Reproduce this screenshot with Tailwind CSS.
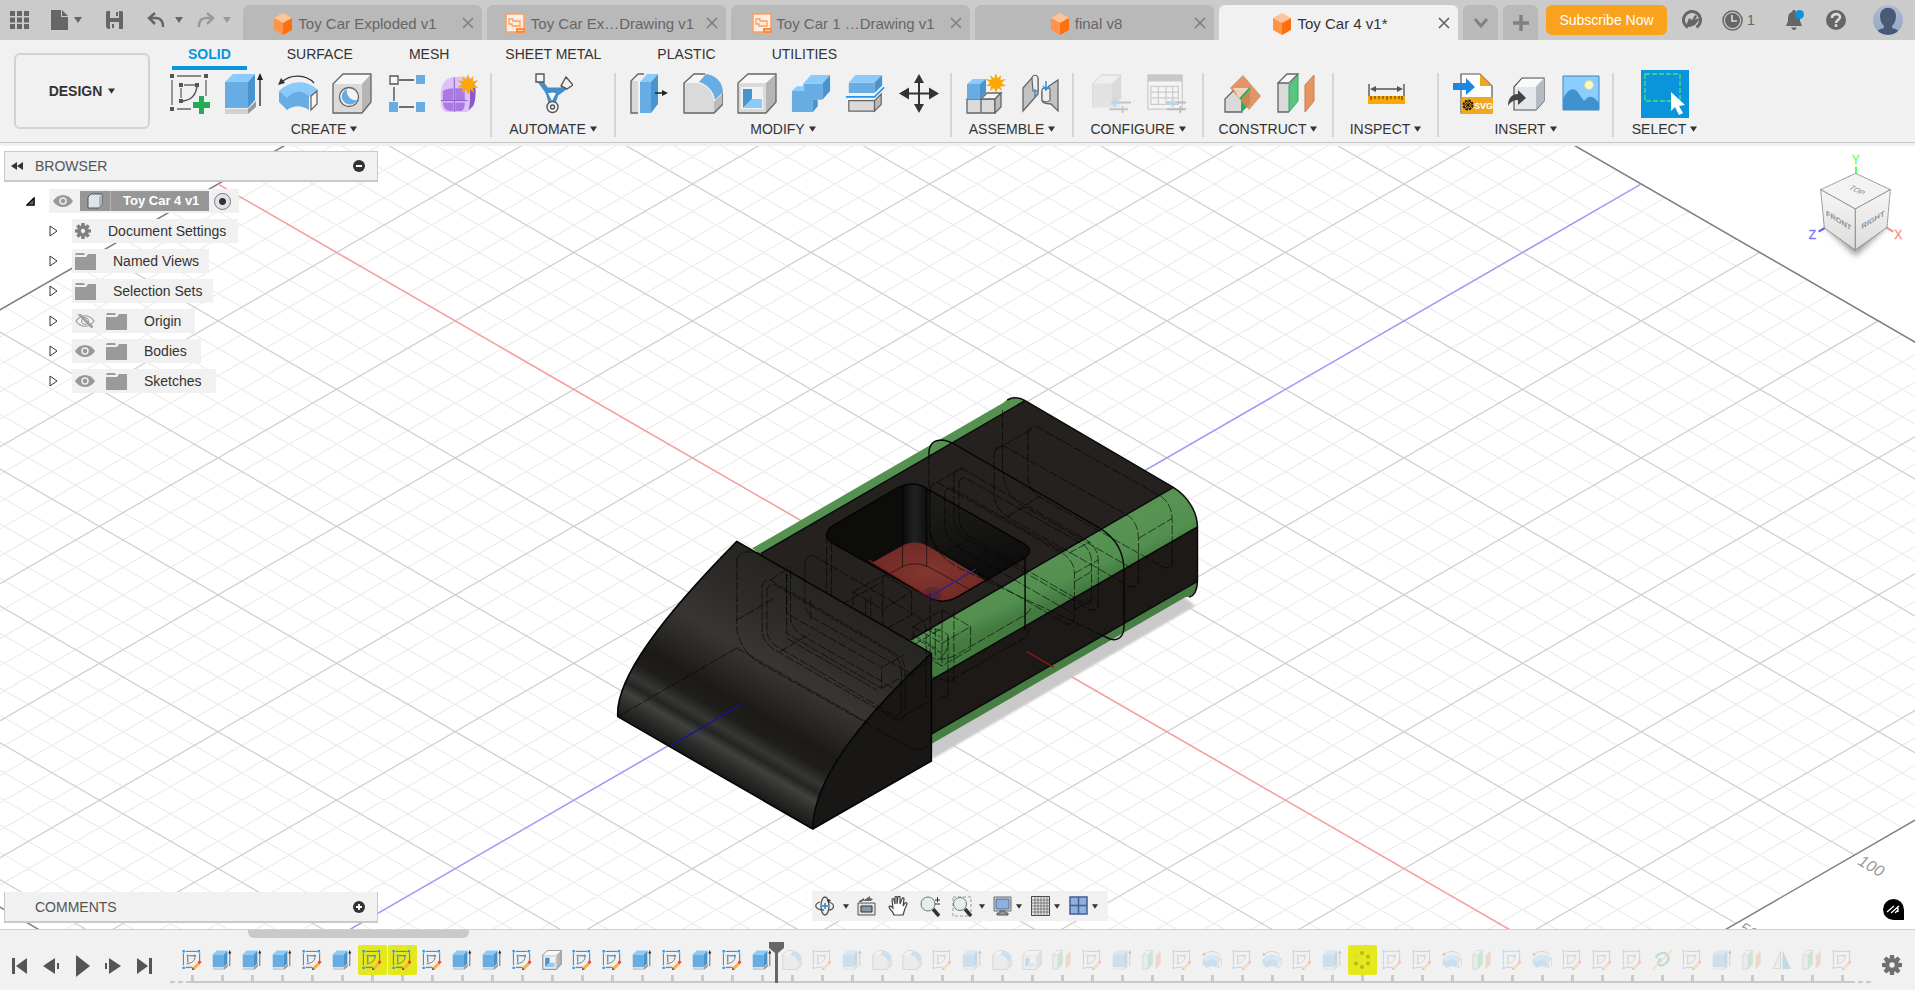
<!DOCTYPE html>
<html lang="en">
<head>
    <meta charset="UTF-8">
    <meta name="viewport" content="width=device-width, initial-scale=1.0">
    <title>Toy Car 4 v1*</title>
    <script src="https://cdn.jsdelivr.net/npm/@tailwindcss/browser@4"></script>
</head>
<body class="h-screen flex flex-col overflow-hidden bg-[#f1f1f1] font-['Liberation_Sans',Arial,sans-serif] text-sm text-[#333]">

<!-- Icon library -->
<svg class="hidden" aria-hidden="true">
    <symbol id="i-cube" viewBox="0 0 18 22">
        <path fill="#ffc39a" d="M9 0l9 5-9 5-9-5z"/><path fill="#ff9449" d="M0 5l9 5v12l-9-5z"/><path fill="#ff6f0f" d="M18 5l-9 5v12l9-5z"/>
    </symbol>
    <symbol id="i-drawing" viewBox="0 0 20 20">
        <path fill="#fbeee4" stroke="#ff9d5c" stroke-width="1.500" d="M1 1h18v18H1z"/>
        <path fill="none" stroke="#ff9d5c" stroke-width="1.300" d="M4 6h4v2h7v5H7v-2H4z"/><path fill="#ff8a3c" d="M11 15h9v5h-9z"/><path stroke="#ffd2b0" d="M13 17.500h5"/>
    </symbol>
    <symbol id="i-x" viewBox="0 0 12 12"><path stroke="currentColor" stroke-width="1.700" d="M1 1l10 10M11 1L1 11"/></symbol>
    <symbol id="i-down" viewBox="0 0 8 6"><path fill="currentColor" d="M0 0h8L4 6z"/></symbol>
    <symbol id="i-gear" viewBox="0 0 20 20">
        <g fill="currentColor"><path id="tooth" d="M8 0h4l.6 5H7.400zM8 20h4l.6-5H7.400z"/><use href="#tooth" transform="rotate(45 10 10)"/><use href="#tooth" transform="rotate(90 10 10)"/><use href="#tooth" transform="rotate(135 10 10)"/></g>
        <circle cx="10" cy="10" r="4.700" fill="none" stroke="currentColor" stroke-width="4"/>
    </symbol>
    <symbol id="i-folder" viewBox="0 0 21 17"><path fill="#9a9a9a" d="M0 4h11l2-3h8v16H0zM1 0h8l1 2H0z"/></symbol>
    <symbol id="i-eye" viewBox="0 0 20 12"><path fill="#999" d="M0 6c5-8 15-8 20 0-5 8-15 8-20 0z"/><circle cx="10" cy="6" r="3" fill="#999" stroke="#eee" stroke-width="1.500"/></symbol>
    <symbol id="i-eye-off" viewBox="0 0 20 14"><path fill="none" stroke="#999" stroke-width="1.200" d="M1 7c5-7 13-7 18 0-5 7-13 7-18 0zM3 0l14 14M5 0l13 13"/><circle cx="10" cy="7" r="3.500" fill="none" stroke="#999"/></symbol>

    <symbol id="i-sketch-base" viewBox="0 0 40 40">
        <path fill="none" stroke="#666" stroke-width="1.300" d="M7 3h24M2 7v25M36 7v16M7 36h14M14 12h11M11 15v10"/>
        <path fill="none" stroke="#555" stroke-width="1.500" d="M27 13c-1 9-6 14-14 15"/>
    </symbol>
    <symbol id="i-sketch" viewBox="0 0 40 41">
        <use href="#i-sketch-base" width="40" height="40"/>
        <path fill="#555" d="M0 1h4v4H0zM34 1h4v4h-4zM0 34h4v4H0zM9 10h4v4H9zM25 10h4v4h-4zM9 26h4v4H9z"/>
        <path fill="#26ab55" d="M29 23h5v6h6v6h-6v6h-5v-6h-6v-6h6z"/>
    </symbol>
    <symbol id="t-sketch" viewBox="0 0 40 42">
        <use href="#i-sketch-base" width="40" height="40"/>
        <path fill="none" stroke="#777" stroke-width="1.800" d="M7 3h24M2 7v25M36 7v16M7 37h14M14 12h11M11 15v10"/>
        <path fill="#3399e6" d="M0 0h5v5H0zM32 0h5v5h-5zM0 35h5v5H0zM9 10h4v4H9zM24 10h4v4h-4zM9 26h4v4H9z"/>
        <path fill="#fbb040" d="M32 26l5 4-11 11-5-4z"/><path fill="#ef3e36" d="M35 21l5 4-4 5-4-4z"/><path fill="#444" d="M21 37l5 4-6 1z"/>
    </symbol>
    <symbol id="i-extrude" viewBox="0 0 40 41">
        <path fill="#d0d0d0" d="M1 36h23v5H1z"/><path fill="#999" d="M24 36l8-8v6l-8 7z"/>
        <path fill="#67ade3" d="M1 9h23v26H1z"/><path fill="#8bcbfb" d="M1 9l8-8h22l-7 8z"/><path fill="#4994cd" d="M24 9l7-8v26l-7 8z"/>
        <path stroke="#222" stroke-width="1.300" d="M36 5v28"/><path fill="#222" d="M36 0l3 7h-6z"/>
    </symbol>
    <symbol id="i-revolve" viewBox="0 0 40 41">
        <path fill="none" stroke="#333" stroke-width="1.300" d="M4 9c8-8 24-8 32 1"/><path fill="#333" d="M0 12l3-7 4 5z"/>
        <path fill="#67ade3" d="M1 19c4-4 8-4 11-3 7-2 13 1 19 6v15c-8-5-15-5-22 0L1 29z"/>
        <path fill="#8bcbfb" d="M1 18c11-11 28-12 39-1l-8 7c-8-7-16-7-23 1z"/>
        <path fill="#f6f6f6" stroke="#666" stroke-width="1.300" d="M33 23l6-5v13l-6 6z"/>
    </symbol>
    <symbol id="i-hole" viewBox="0 0 40 41">
        <path fill="#f6f6f6" d="M1 11L11 1h28l-9 10z"/><path fill="#b5b5b5" d="M30 11l9-10v28l-9 11z"/><path fill="#dadada" d="M1 11h29v29H1z"/>
        <path fill="none" stroke="#666" stroke-width="1.300" d="M1 11L11 1h28v28l-9 11H1z"/>
        <circle cx="17" cy="24" r="9.500" fill="#f4f4f4" stroke="#666" stroke-width="1.300"/><path fill="#67ade3" d="M15 16a8 8 0 1 0 10 11c-6 1-11-4-10-11z"/>
    </symbol>
    <symbol id="i-pattern" viewBox="0 0 40 41">
        <path stroke="#444" stroke-width="1.300" d="M13 7h15M13 34h15M8 14v14"/><path fill="#f7f7f7" stroke="#555" stroke-width="1.300" d="M4 3h8v8H4z"/>
        <path fill="#67ade3" d="M30 2h9v9h-9zM3 29h9v10H3zM30 29h9v10h-9z"/>
    </symbol>
    <symbol id="i-star" viewBox="0 0 20 20"><path fill="#fba806" d="M10 0l1.500 5.500L15 2l-.5 5L20 6l-4.500 4 4.500 3-5.500.5L16 18l-4-3-2 5-2-5-4 3 1-5-5 0 4-3-4-4 5.500 1L4 2l4 3.500z"/></symbol>
    <symbol id="i-form" viewBox="0 0 42 41">
        <path fill="#dcc2f7" d="M1 17C3 6 10 2 19 3h10c7 2 9 9 8 20 0 10-4 17-12 17H10C2 40 0 36 1 17z"/>
        <path fill="#ab78e6" d="M3 18c3-2 8-3 11-3v13H3zM16 15h10v13H16zM3 30h11v9C6 39 4 36 3 30zM16 30h10c0 5-1 8-4 9h-6z"/>
        <path fill="#8b57cb" d="M31 15l5-5c2 5 2 16-1 23l-5 5c2-7 2-15 1-23z"/><path fill="none" stroke="#8b57cb" d="M1 28h28M15 4v36"/>
        <use href="#i-star" x="18" y="0" width="23" height="22"/>
    </symbol>
    <symbol id="i-automate" viewBox="0 0 40 41">
        <path fill="none" stroke="#438fca" stroke-width="5" stroke-linejoin="round" d="M7 8l8 11 4 14M34 13l-11 8-4 12M12 17h15"/><path fill="#fff" d="M15 20h8l-4 8z"/>
        <path fill="#f4f4f4" stroke="#555" stroke-width="1.400" d="M3 1h8v8H3zM33 4l7 8-6 4-6-3z"/><circle cx="19.500" cy="34" r="5.500" fill="#f4f4f4" stroke="#555" stroke-width="1.400"/><circle cx="19.500" cy="34" r="2" fill="none" stroke="#555" stroke-width="1.400"/>
    </symbol>
    <symbol id="i-press" viewBox="0 0 40 41">
        <path fill="#d8d8d8" d="M2 8h7v32H2z"/><path fill="none" stroke="#666" stroke-width="1.400" d="M9 40H2V8l7-7h6"/>
        <path fill="#67ade3" d="M11 9h11v31H11z"/><path fill="#8bcbfb" d="M11 9l7-8h11l-7 8z"/><path fill="#4994cd" d="M22 9l7-8v30l-7 9z"/>
        <path stroke="#222" stroke-width="1.500" d="M26 20h9"/><path fill="#222" d="M33 17l6 3-6 3z"/>
    </symbol>
    <symbol id="i-fillet" viewBox="0 0 40 41">
        <path fill="#f6f6f6" d="M1 10l10-9h10l-6 9z"/><path fill="#dadada" d="M1 10h14c9 2 15 9 16 19v11H1z"/><path fill="#bbb" d="M31 29l9-9v11l-9 9z"/>
        <path fill="none" stroke="#666" stroke-width="1.400" d="M22 1H11l-10 9v30h30l9-9V20"/><path fill="#67ade3" d="M16 9l7-8c10 1 17 9 17 18l-8 8c-1-9-8-16-16-18z"/>
    </symbol>
    <symbol id="i-shell" viewBox="0 0 40 41">
        <path fill="#f8f8f8" d="M1 10L11 1h28l-10 9z"/><path fill="#b5b5b5" d="M29 10l10-9v28L29 40z"/><path fill="#dadada" d="M1 10h28v30H1z"/><path fill="none" stroke="#666" stroke-width="1.300" d="M1 10L11 1h28v28L29 40H1z"/>
        <path fill="#f2f2f2" d="M4 14h22v22H4z"/><path fill="#4994cd" d="M6 16h9v10l-9 9z"/><path fill="#8bcbfb" d="M15 26h10v9H6z"/>
    </symbol>
    <symbol id="i-combine" viewBox="0 0 42 41">
        <path fill="#67ade3" d="M1 18h12V10h20v17H23v13H1z"/><path fill="#8bcbfb" d="M1 18l5-5h8v5zM13 10l8-9h20l-8 9z"/><path fill="#4994cd" d="M33 10l8-9v17l-8 9zM23 27h5v7l-5 6z"/>
    </symbol>
    <symbol id="i-split" viewBox="0 0 42 41">
        <path fill="#67ade3" d="M4 9h27v11H4z"/><path fill="#8bcbfb" d="M4 9l7-8h28l-8 8z"/><path fill="#4994cd" d="M31 9l8-8v11l-8 8z"/>
        <path fill="none" stroke="#2497ea" stroke-width="1.700" d="M1 24h30l10-10"/><path fill="#dadada" stroke="#666" stroke-width="1.300" d="M4 28h27v11H4z"/><path fill="#bbb" stroke="#666" stroke-width="1.300" d="M31 28l7-7v11l-7 7z"/>
    </symbol>
    <symbol id="i-move" viewBox="0 0 40 41">
        <path stroke="#333" stroke-width="2" d="M20 6v28M6 20.500h28"/><path fill="#333" d="M20 1l5 9H15zM20 40l5-9H15zM0 20.500l10-6v12zM40 20.500l-10-6v12z"/>
    </symbol>
    <symbol id="i-component" viewBox="0 0 40 41">
        <path fill="#dadada" stroke="#666" stroke-width="1.300" d="M1 26h14v14H1zM15 26h14v14H15z"/><path fill="#f4f4f4" stroke="#666" stroke-width="1.300" d="M15 26l6-6h14l-6 6z"/><path fill="#bbb" stroke="#666" stroke-width="1.300" d="M29 26l6-6v14l-6 6z"/>
        <path fill="#67ade3" d="M1 11h13v15H1z"/><path fill="#8bcbfb" d="M1 11l6-5h14l-7 5z"/><path fill="#4994cd" d="M14 11l6-5v14l-6 6z"/><use href="#i-star" x="20" y="0" width="20" height="20"/>
    </symbol>
    <symbol id="i-joint" viewBox="0 0 40 41">
        <path fill="#c2c2c2" stroke="#666" stroke-width="1.300" d="M3 14l8-9c2-4 7-3 7 1v14l-7 8-8 9zM38 6v31l-7-7c-5 0-9-1-9-4V18c2-3 5-3 7-2V12z" transform="matrix(1 0 0 1 0 1)"/><path fill="#eee" stroke="#666" stroke-width="1.200" d="M12 6c0-5 6-5 6 0v12h-5zM22 17c0-3 8-3 8 0v10c-2 3-7 2-8 0z"/>
        <path fill="none" stroke="#2b92e4" stroke-width="1.500" d="M15 16v9M26 8v8M23 13l3 4 3-4"/>
    </symbol>
    <symbol id="i-config" viewBox="0 0 42 41">
        <path fill="#e4e4e4" d="M1 10h28v25H1z"/><path fill="#efefef" stroke="#d0d0d0" d="M1 35V10l9-9h20v25"/><path fill="#e2e2e2" d="M1 10h20v25H1z"/><path fill="#dadada" d="M21 10l9-9v25l-9 8z"/><path stroke="#c4c4c4" stroke-width="2" d="M21 30h20M18 37h20M32 34v7"/><path stroke="#b4daf4" stroke-width="2" d="M24 25v10M20 30h8"/>
    </symbol>
    <symbol id="i-table" viewBox="0 0 42 41">
        <path fill="#f4f4f4" stroke="#ccc" stroke-width="1.300" d="M2 1h36v36H2z"/><path fill="#c8c8c8" d="M2 1h36v7H2z"/><path fill="none" stroke="#ccc" stroke-width="1.300" d="M5 13h29v19H5zM5 19h29M5 25h29M13 13v19M21 13v19M28 13v19"/><path stroke="#bbb" stroke-width="2" d="M22 30h20M22 37h20M36 34v7"/><path stroke="#b4daf4" stroke-width="2" d="M28 25v10M24 30h8"/>
    </symbol>
    <symbol id="i-plane" viewBox="0 0 40 41">
        <path fill="#dadada" stroke="#666" stroke-width="1.300" d="M2 26l9-9 8 4v18H2z"/><path fill="#2fae5c" d="M18 26l9-9v14l-9 9z"/><path fill="#dd8550" fill-opacity=".85" d="M20 2l18 21-12 14L7 15z"/><path fill="#fff" fill-opacity=".6" d="M10 15h17L17 27z"/><path stroke="#2fae5c" stroke-width="2" d="M27 15l-10 11"/>
    </symbol>
    <symbol id="i-offset" viewBox="0 0 40 41">
        <path fill="#dadada" d="M1 10h11v29H1z"/><path fill="#f7f7f7" stroke="#666" stroke-width="1.300" d="M1 10l9-9h11l-9 9z"/><path fill="none" stroke="#666" stroke-width="1.300" d="M12 39H1V10"/><path fill="#5ac481" stroke="#3ea466" d="M12 12l9-10v26l-9 11z"/><path fill="#e59560" stroke="#cd7d48" d="M28 12l9-10v26l-9 11z"/>
    </symbol>
    <symbol id="i-measure" viewBox="0 0 40 41">
        <path stroke="#555" stroke-width="1.400" d="M3 11v12M38 11v12M6 16h29"/><path fill="#555" d="M4 16l6-3v6zM37 16l-6-3v6z"/><path fill="#fba806" d="M2 23h37v8H2z"/><path stroke="#694500" stroke-width="1.200" d="M5 23v4M9 23v3M13 23v3M17 23v3M21 23v4M25 23v3M29 23v3M33 23v3M36 23v4"/>
    </symbol>
    <symbol id="i-svgfile" viewBox="0 0 40 41">
        <path fill="#fff" stroke="#555" stroke-width="1.200" d="M8 40V1h19l12 12v27z"/><path fill="#f0a823" d="M27 1l12 12H27zM8 24h32v17H8z"/><path fill="#1c86e3" d="M0 10h13V5l9 9-9 8v-5H0z"/>
        <circle cx="15" cy="32" r="4.500" fill="none" stroke="#201703" stroke-width="1.800" stroke-dasharray="2.500 1"/><path stroke="#201703" d="M11 32h8M15 28v8M12 29l6 6M18 29l-6 6"/>
        <text x="21" y="36" font-family="Liberation Sans, sans-serif" font-size="9" font-weight="bold" fill="#fff">SVG</text>
    </symbol>
    <symbol id="i-derive" viewBox="0 0 40 41">
        <path fill="#e4e7ec" stroke="#555" stroke-width="1.200" d="M7 14l8-9h22v23l-8 9H7z"/><path fill="#b5bbc6" d="M29 14l8-9v23l-8 9z"/><path fill="#fafafa" d="M8 14l7-8h21l-8 8z"/><path fill="#444" d="M1 33c0-8 4-12 10-12v-4l8 8-8 7v-5c-4 0-7 1-10 6z"/>
    </symbol>
    <symbol id="i-image" viewBox="0 0 40 41"><path fill="#8bcdff" stroke="#3d86bd" d="M2 3h36v34H2z"/><circle cx="28" cy="12" r="4.500" fill="#fff7c4" stroke="#d9d98e"/><path fill="#3e92cf" d="M2 26c6-12 12-12 16-5l5 7c5-6 9-6 15 2v7H2z"/></symbol>
    <symbol id="i-select" viewBox="0 0 48 48"><path fill="#0a94dc" d="M0 0h48v48H0z"/><path fill="none" stroke="#4fe07a" stroke-width="1.300" stroke-dasharray="5 2" d="M4 4h35v27H4z"/><path fill="#fff" d="M30 22l14 13-6 1 4 7-4 2-4-8-4 4z"/></symbol>
    <symbol id="i-circ" viewBox="0 0 40 40"><g fill="#b4bb14"><circle cx="20" cy="6" r="4"/><circle cx="20" cy="34" r="4"/><circle cx="32" cy="13" r="4"/><circle cx="32" cy="27" r="4"/><circle cx="8" cy="27" r="4"/></g><circle cx="8" cy="13" r="3" fill="#eff07a" stroke="#b4bb14"/></symbol>
    <symbol id="i-thread" viewBox="0 0 40 40"><path fill="none" stroke="#2fae5c" stroke-width="5" d="M8 16c4-12 24-14 25-1 0 11-11 18-18 15-4-2-3-9 3-13"/><path stroke="#e59560" stroke-width="2.500" d="M1 39L39 1"/></symbol>
    <symbol id="i-mirror" viewBox="0 0 40 40"><path fill="#e4e4e4" stroke="#777" stroke-width="1.500" d="M17 3v34H3z"/><path fill="#438fca" d="M21 1v37h17z"/></symbol>
</svg>

<!-- Application bar -->
<header class="flex h-10 shrink-0 items-end bg-[#cbcbcb] text-[#666]">
    <div class="flex h-full w-[243px] shrink-0 items-center">
        <button aria-label="Data panel" class="ml-2.5"><svg class="h-[18px] w-[19px]" viewBox="0 0 19 18"><path fill="#666" d="M0 0h5v5H0zM7 0h5v5H7zM14 0h5v5h-5zM0 6.500h5v5H0zM7 6.500h5v5H7zM14 6.500h5v5h-5zM0 13h5v5H0zM7 13h5v5H7zM14 13h5v5h-5z"/></svg></button>
        <button aria-label="File" class="ml-[22px] flex items-center gap-1.5"><svg class="h-5 w-[17px]" viewBox="0 0 17 20"><path fill="#666" d="M0 0h10v7h7v13H0zM11 0l6 6h-6z"/></svg><svg class="h-1.5 w-2"><use href="#i-down"/></svg></button>
        <button aria-label="Save" class="ml-6"><svg class="h-[18px] w-[17px]" viewBox="0 0 17 18"><path fill="#666" fill-rule="evenodd" d="M1 0h15l1 1v17H2l-2-2V1zM4 0v7h9V0zM4 11v7h9v-7z"/><path fill="#666" d="M10 1h2v4h-2zM6 13h2v4H6z"/></svg></button>
        <button aria-label="Undo" class="ml-6 flex items-center gap-2.5"><svg class="h-4 w-[18px]" viewBox="0 0 18 16"><path fill="none" stroke="#666" stroke-width="2.500" d="M8 1L2 6l6 6M2 6h7c5 0 7 4 7 9"/></svg><svg class="h-1.5 w-2"><use href="#i-down"/></svg></button>
        <button aria-label="Redo" class="ml-3.5 flex items-center gap-2 text-[#999]"><svg class="h-4 w-[18px]" viewBox="0 0 18 16"><path fill="none" stroke="#999" stroke-width="2.500" d="M10 1l6 5-6 6M16 6H9c-5 0-7 4-7 9"/></svg><svg class="h-1.5 w-2"><use href="#i-down"/></svg></button>
    </div>
    <nav class="flex min-w-0 gap-[5px] text-[15px]" aria-label="Documents">
        <div class="flex h-[35px] w-[239px] items-center rounded-t-md bg-[#b9b9b9] pl-1.5 pr-2">
            <button class="flex flex-1 items-center justify-center gap-1.5 whitespace-nowrap pt-0.5"><svg class="h-[22px] w-[18px]"><use href="#i-cube"/></svg>Toy Car Exploded v1</button>
            <button aria-label="Close"><svg class="size-3 text-[#808080]"><use href="#i-x"/></svg></button>
        </div>
        <div class="flex h-[35px] w-[239px] items-center rounded-t-md bg-[#b9b9b9] pl-1.5 pr-2">
            <button class="flex flex-1 items-center justify-center gap-1.5 whitespace-nowrap pt-0.5"><svg class="size-5"><use href="#i-drawing"/></svg>Toy Car Ex…Drawing v1</button>
            <button aria-label="Close"><svg class="size-3 text-[#808080]"><use href="#i-x"/></svg></button>
        </div>
        <div class="flex h-[35px] w-[239px] items-center rounded-t-md bg-[#b9b9b9] pl-1.5 pr-2">
            <button class="flex flex-1 items-center justify-center gap-1 whitespace-nowrap pt-0.5"><svg class="size-5"><use href="#i-drawing"/></svg>Toy Car 1 …Drawing v1</button>
            <button aria-label="Close"><svg class="size-3 text-[#808080]"><use href="#i-x"/></svg></button>
        </div>
        <div class="flex h-[35px] w-[239px] items-center rounded-t-md bg-[#b9b9b9] pl-1 pr-2">
            <button class="flex flex-1 items-center justify-center gap-1.5 whitespace-nowrap pt-0.5"><svg class="h-[22px] w-[18px]"><use href="#i-cube"/></svg>final v8</button>
            <button aria-label="Close"><svg class="size-3 text-[#808080]"><use href="#i-x"/></svg></button>
        </div>
        <div class="flex h-[35px] w-[239px] items-center rounded-t-md bg-[#f1f1f1] pl-1 pr-2 text-[#333]">
            <button class="flex flex-1 items-center justify-center gap-1.5 whitespace-nowrap pt-0.5"><svg class="h-[22px] w-[18px]"><use href="#i-cube"/></svg>Toy Car 4 v1*</button>
            <button aria-label="Close"><svg class="size-3 text-[#666]"><use href="#i-x"/></svg></button>
        </div>
        <button aria-label="All tabs" class="flex h-[35px] w-[35px] items-center justify-center rounded-t-md bg-[#b9b9b9]"><svg class="h-3 w-4" viewBox="0 0 16 12"><path fill="none" stroke="#808080" stroke-width="3" d="M2 2l6 7 6-7"/></svg></button>
        <button aria-label="New tab" class="flex h-[35px] w-[35px] items-center justify-center rounded-t-md bg-[#b9b9b9]"><svg class="size-4" viewBox="0 0 16 16"><path stroke="#808080" stroke-width="3.500" d="M8 0v16M0 8h16"/></svg></button>
    </nav>
    <div class="ml-2 flex h-full flex-1 items-center">
        <button class="h-[30px] w-[121px] rounded-md bg-[#faa21b] text-sm text-white">Subscribe Now</button>
        <button aria-label="Extensions" class="ml-[15px]"><svg class="size-5" viewBox="0 0 20 20"><circle cx="10" cy="10" r="8.500" fill="none" stroke="#666" stroke-width="3" stroke-dasharray="44 9" transform="rotate(120 10 10)"/><path fill="#666" d="M4 16l3-8 3 2 3-5 2 1-2 4 3-2 1 2-4 5-5 2z"/></svg></button>
        <button aria-label="Job status" class="ml-5 flex items-center gap-1"><svg class="size-[21px]" viewBox="0 0 21 21"><circle cx="10.500" cy="10.500" r="9.500" fill="none" stroke="#666" stroke-width="1.500"/><circle cx="10.500" cy="10.500" r="7.500" fill="#666"/><path fill="none" stroke="#ddd" stroke-width="1.600" d="M10 5v6h5"/></svg>1</button>
        <button aria-label="Notifications" class="ml-[30px]"><svg class="h-5 w-[19px]" viewBox="0 0 19 20"><path fill="#666" d="M8 0h2l1 2c4 1 4 5 4 9l2 5H1l2-5c0-4 0-8 4-9zM6 17.500h6l-2 2.500H8z"/><circle cx="14.500" cy="4.500" r="4.500" fill="#0a94dc"/></svg></button>
        <button aria-label="Help" class="ml-[22px]"><svg class="size-5" viewBox="0 0 20 20"><circle cx="10" cy="10" r="10" fill="#666"/><path fill="none" stroke="#ddd" stroke-width="2.600" d="M6 8c0-5 8-5 8-1 0 3-4 3-4 6"/><circle cx="10" cy="15.500" r="1.500" fill="#ddd"/></svg></button>
        <button aria-label="Account" class="ml-auto mr-3"><svg class="size-[30px]" viewBox="0 0 30 30"><defs><clipPath id="av"><circle cx="15" cy="15" r="15"/></clipPath><linearGradient id="avg" x2="0" y2="1"><stop stop-color="#aebbd4"/><stop offset="1" stop-color="#8fa5c6"/></linearGradient></defs><g clip-path="url(#av)"><path fill="url(#avg)" d="M0 0h30v30H0z"/><path fill="#4a5a74" d="M7 11c0-11 16-11 16 0 0 5-2 8-4 10v2c4 1 7 2 8 7H3c1-5 4-6 8-7v-2c-2-2-4-5-4-10z"/></g></svg></button>
    </div>
</header>

<!-- Ribbon -->
<section class="flex shrink-0 border-b border-[#c9c9c9] pb-[5px]" aria-label="Toolbar">
    <div class="w-[158px] shrink-0 pl-[14px] pt-[13px]">
        <button class="flex h-[76px] w-[136px] items-center justify-center gap-1.5 rounded-md border-2 border-[#d2d2d2] font-bold">DESIGN <svg class="h-1.5 w-[7px]"><use href="#i-down"/></svg></button>
    </div>
    <div>
        <div class="flex gap-6 pl-[14px]" role="tablist">
            <button role="tab" class="h-[30px] border-b-4 border-[#0a94dc] px-4 pt-0.5 font-bold text-[#0a94dc]">SOLID</button>
            <button role="tab" class="h-[30px] border-b-4 border-transparent px-4 pt-0.5">SURFACE</button>
            <button role="tab" class="h-[30px] border-b-4 border-transparent px-4 pt-0.5">MESH</button>
            <button role="tab" class="h-[30px] border-b-4 border-transparent px-4 pt-0.5">SHEET METAL</button>
            <button role="tab" class="h-[30px] border-b-4 border-transparent px-4 pt-0.5">PLASTIC</button>
            <button role="tab" class="h-[30px] border-b-4 border-transparent px-4 pt-0.5">UTILITIES</button>
        </div>
        <div class="mt-[3px] flex">
            <div class="flex h-16 w-[334px] flex-col items-center justify-between border-r-2 border-[#d6d6d6]">
                <div class="flex gap-3.5 pl-0.5">
                    <button aria-label="Create Sketch"><svg class="h-[41px] w-10"><use href="#i-sketch"/></svg></button>
                    <button aria-label="Extrude"><svg class="h-[41px] w-10"><use href="#i-extrude"/></svg></button>
                    <button aria-label="Revolve"><svg class="h-[41px] w-10"><use href="#i-revolve"/></svg></button>
                    <button aria-label="Hole"><svg class="h-[41px] w-10"><use href="#i-hole"/></svg></button>
                    <button aria-label="Rectangular Pattern"><svg class="h-[41px] w-10"><use href="#i-pattern"/></svg></button>
                    <button aria-label="Create Form"><svg class="h-[41px] w-10"><use href="#i-form"/></svg></button>
                </div>
                <button class="flex items-center gap-1 leading-4">CREATE <svg class="h-1.5 w-[7px]"><use href="#i-down"/></svg></button>
            </div>
            <div class="flex h-16 w-[124px] flex-col items-center justify-between border-r-2 border-[#d6d6d6]">
                <button aria-label="Automated Modeling"><svg class="h-[41px] w-10"><use href="#i-automate"/></svg></button>
                <button class="flex items-center gap-1 leading-4">AUTOMATE <svg class="h-1.5 w-[7px]"><use href="#i-down"/></svg></button>
            </div>
            <div class="flex h-16 w-[336px] flex-col items-center justify-between border-r-2 border-[#d6d6d6]">
                <div class="flex gap-3.5 pl-0.5">
                    <button aria-label="Press Pull"><svg class="h-[41px] w-10"><use href="#i-press"/></svg></button>
                    <button aria-label="Fillet"><svg class="h-[41px] w-10"><use href="#i-fillet"/></svg></button>
                    <button aria-label="Shell"><svg class="h-[41px] w-10"><use href="#i-shell"/></svg></button>
                    <button aria-label="Combine"><svg class="h-[41px] w-10"><use href="#i-combine"/></svg></button>
                    <button aria-label="Split Body"><svg class="h-[41px] w-10"><use href="#i-split"/></svg></button>
                    <button aria-label="Move"><svg class="h-[41px] w-10"><use href="#i-move"/></svg></button>
                </div>
                <button class="flex items-center gap-1 leading-4">MODIFY <svg class="h-1.5 w-[7px]"><use href="#i-down"/></svg></button>
            </div>
            <div class="flex h-16 w-[122px] flex-col items-center justify-between border-r-2 border-[#d6d6d6]">
                <div class="flex gap-3.5 pl-0.5">
                    <button aria-label="New Component"><svg class="h-[41px] w-10"><use href="#i-component"/></svg></button>
                    <button aria-label="Joint"><svg class="h-[41px] w-10"><use href="#i-joint"/></svg></button>
                </div>
                <button class="flex items-center gap-1 leading-4">ASSEMBLE <svg class="h-1.5 w-[7px]"><use href="#i-down"/></svg></button>
            </div>
            <div class="flex h-16 w-[130px] flex-col items-center justify-between border-r-2 border-[#d6d6d6]">
                <div class="flex gap-3.5 pl-0.5">
                    <button aria-label="Configure Design" disabled><svg class="h-[41px] w-10"><use href="#i-config"/></svg></button>
                    <button aria-label="Configuration Table" disabled><svg class="h-[41px] w-10"><use href="#i-table"/></svg></button>
                </div>
                <button class="flex items-center gap-1 leading-4">CONFIGURE <svg class="h-1.5 w-[7px]"><use href="#i-down"/></svg></button>
            </div>
            <div class="flex h-16 w-[130px] flex-col items-center justify-between border-r-2 border-[#d6d6d6]">
                <div class="flex gap-3.5 pl-1">
                    <button aria-label="Construction Plane"><svg class="h-[41px] w-10"><use href="#i-plane"/></svg></button>
                    <button aria-label="Offset Plane"><svg class="h-[41px] w-10"><use href="#i-offset"/></svg></button>
                </div>
                <button class="flex items-center gap-1 leading-4">CONSTRUCT <svg class="h-1.5 w-[7px]"><use href="#i-down"/></svg></button>
            </div>
            <div class="flex h-16 w-[105px] flex-col items-center justify-between border-r-2 border-[#d6d6d6]">
                <button aria-label="Measure"><svg class="h-[41px] w-10"><use href="#i-measure"/></svg></button>
                <button class="flex items-center gap-1 leading-4">INSPECT <svg class="h-1.5 w-[7px]"><use href="#i-down"/></svg></button>
            </div>
            <div class="flex h-16 w-[175px] flex-col items-center justify-between border-r-2 border-[#d6d6d6]">
                <div class="flex gap-3.5 pl-0.5">
                    <button aria-label="Insert SVG"><svg class="h-[41px] w-10"><use href="#i-svgfile"/></svg></button>
                    <button aria-label="Insert Derive"><svg class="h-[41px] w-10"><use href="#i-derive"/></svg></button>
                    <button aria-label="Canvas"><svg class="h-[41px] w-10"><use href="#i-image"/></svg></button>
                </div>
                <button class="flex items-center gap-1 leading-4">INSERT <svg class="h-1.5 w-[7px]"><use href="#i-down"/></svg></button>
            </div>
            <div class="flex h-16 w-[101px] flex-col items-center justify-between">
                <button aria-label="Select" class="-mt-[3px]"><svg class="size-12"><use href="#i-select"/></svg></button>
                <button class="flex items-center gap-1 leading-4">SELECT <svg class="h-1.5 w-[7px]"><use href="#i-down"/></svg></button>
            </div>
        </div>
    </div>
</section>

<!-- Viewport -->
<main class="relative mt-[3px] min-h-0 flex-1 overflow-hidden bg-white">
    <svg class="absolute inset-0 h-full w-full" viewBox="0 146 1915 783" preserveAspectRatio="xMidYMid slice">
        <defs>
            <linearGradient id="nose" gradientUnits="userSpaceOnUse" x1="346" y1="484" x2="5" y2="982">
                <stop stop-color="#272522"/><stop offset=".25" stop-color="#2f2d2a"/><stop offset=".42" stop-color="#393632"/><stop offset=".55" stop-color="#2a2825"/><stop offset=".66" stop-color="#1b1a17"/><stop offset=".74" stop-color="#1f1e1c"/>
                <stop offset=".8" stop-color="#363634"/><stop offset=".84" stop-color="#242422"/><stop offset=".88" stop-color="#40403e"/><stop offset=".93" stop-color="#2e2e2c"/><stop offset="1" stop-color="#191917"/>
            </linearGradient>
            <linearGradient id="grn" gradientUnits="userSpaceOnUse" x1="1200" y1="495" x2="1260" y2="610"><stop stop-color="#579454"/><stop offset=".6" stop-color="#539050"/><stop offset="1" stop-color="#427a40"/></linearGradient>
            <linearGradient id="corner"><stop stop-color="#0a0a0a"/><stop offset=".5" stop-color="#222"/><stop offset="1" stop-color="#101010"/></linearGradient>
            <linearGradient id="wall" gradientUnits="userSpaceOnUse" x1="900" y1="370" x2="960" y2="600"><stop stop-color="#1c1b19"/><stop offset="1" stop-color="#0b0b0b"/></linearGradient>
            <radialGradient id="floor"><stop stop-color="#833730"/><stop offset="1" stop-color="#712b26"/></radialGradient>
            <filter id="soft" x="-10%" y="-10%" width="120%" height="120%"><feGaussianBlur stdDeviation="3"/></filter>
        </defs>
        <g id="grid" fill="none"></g>
        <g font-family="Liberation Sans, sans-serif" font-style="italic" font-size="16" fill="#999">
            <text transform="translate(1857 864) rotate(30)">100</text>
            <text transform="translate(1738 931) rotate(30)">50</text>
        </g>

        <!-- Car body -->
        <g transform="translate(600 380) scale(.39541 .33333)" stroke-linejoin="round">
            <path fill="#c9c9c9" filter="url(#soft)" d="M830 1080L1470 645l36 32L842 1136z"/>
            <path fill="#559251" d="M385 505L1020 68Q1042 44 1075 62L408 525z"/>
            <path fill="#24211e" d="M408 520L1075 62l375 260L785 780V810L390 545z"/>
            <path fill="url(#grn)" d="M785 780L1450 322C1490 352 1511 400 1511 441L838 900 785 810z"/>
            <path fill="#1c1917" d="M838 900L1511 441V604L838 1062z"/>
            <path fill="#477e43" d="M838 1062L1511 604C1511 632 1500 652 1480 652L838 1092z"/>
            <path fill="none" stroke="#0a0a0a" stroke-width="1.500" vector-effect="non-scaling-stroke" d="M1030 60Q1050 46 1075 62L1450 322C1490 352 1511 400 1511 441V604Q1510 645 1490 652M408 520L1075 62M785 780L1450 322M838 900L1511 441M838 1062L1511 604"/>
            <!-- Cockpit pocket -->
            <path fill="#0c0c0b" d="M585 440L750 325Q795 298 830 328L1075 493Q1097 512 1075 533L905 650Q865 677 830 650L585 488Q562 465 585 440z"/>
            <path fill="url(#wall)" d="M826 325L1075 493Q1097 512 1075 533L975 600 826 497z"/>
            <path fill="url(#corner)" d="M765 318Q795 305 826 325V500H765z"/>
            <path fill="url(#floor)" d="M688 548L760 500Q795 475 832 500L975 600 905 650Q865 677 830 650z"/>
            <path fill="none" stroke="#050505" stroke-width="1.500" vector-effect="non-scaling-stroke" d="M585 440L750 325Q795 298 830 328L1075 493Q1097 512 1075 533L905 650Q865 677 830 650L585 488Q562 465 585 440zM765 320V497M826 325V497"/>
            <path fill="none" stroke="#000" stroke-opacity=".55" vector-effect="non-scaling-stroke" d="M765 497V562M826 497V560M715 592L765 560Q795 542 830 560L940 632"/>
            <circle cx="840" cy="645" r="24" fill="#3a1d33" fill-opacity=".35"/><circle cx="840" cy="645" r="11" fill="none" stroke="#30204a" stroke-opacity=".7"/>
            <!-- Seam around the cabin -->
            <path fill="none" stroke="#060606" stroke-width="1.400" vector-effect="non-scaling-stroke" d="M832 230V215C834 188 850 180 865 180Q880 182 900 195L1265 445C1305 475 1325 520 1325 570V740C1325 770 1310 785 1290 777L1265 763M1075 533V750"/>
            <!-- Hidden edges -->
            <g fill="none" stroke="#000" stroke-opacity=".6" stroke-dasharray="9 2">
                <path vector-effect="non-scaling-stroke" d="M1018 90V265C1020 330 1050 370 1080 385L1345 565M1082 160Q1085 138 1105 140L1420 350Q1447 375 1447 420V545Q1447 570 1425 562L1110 350Q1082 325 1082 290zM997 220Q1000 195 1020 197L1340 410Q1362 435 1362 480V600Q1360 625 1340 620L1030 410Q997 385 997 340zM1000 210L1095 145M1030 410L1110 350M1362 475L1447 415"/>
                <path vector-effect="non-scaling-stroke" d="M832 230V440C834 500 870 540 910 565L1265 763M895 290Q898 262 915 265L1230 480Q1258 500 1260 540V670Q1260 695 1240 690L930 480Q895 455 895 410zM908 308Q910 290 925 295L1220 492Q1242 510 1243 545V655Q1242 675 1228 672L940 475Q908 455 908 410z"/>
                <path vector-effect="non-scaling-stroke" d="M835 330Q838 305 855 308L1170 520Q1200 545 1200 580V710Q1198 737 1180 732L870 520Q835 490 835 440zM872 345Q874 320 890 325L1180 520M872 345V440Q875 480 910 505L1195 700M850 308L915 265M870 520L930 480M1200 580L1260 540M1185 520L1240 485M1200 605L1243 575M1200 690L1250 655M1175 510L1228 475"/>
                <path vector-effect="non-scaling-stroke" d="M573 465V690Q575 712 600 728L800 860Q840 900 895 905M585 488V700M585 690L710 608M1090 685Q1085 700 1060 715L900 825Q860 850 820 825M1087 740Q1085 770 1065 780L880 905M640 635L720 585 788 635V705L715 752 640 700zM640 635L715 690 788 635M715 590V752M672 660V735M685 650V738"/>
                <path vector-effect="non-scaling-stroke" d="M792 740L865 690 937 740V808L865 858 792 808zM792 740L865 790 937 740M865 690V858M835 640V835M895 690V905M848 745V826M880 770Q885 810 860 835M820 755Q850 735 880 765V930Q882 955 865 950M792 795L865 745M792 765L850 805M805 780L865 820M830 750L860 770"/>
            </g>

            <!-- Nose -->
            <path fill="url(#nose)" d="M346 484L838 820C690 985 540 1180 538 1347L45 1010C38 900 150 720 346 484z"/>
            <path fill="#191715" d="M838 820V1143L538 1347C540 1180 690 985 838 820z"/>
            <path fill="none" stroke="#050505" stroke-width="1.600" vector-effect="non-scaling-stroke" d="M346 484L838 820C690 985 540 1180 538 1347L45 1010C38 900 150 720 346 484zM838 820V1143L538 1347"/>
            <g fill="none" stroke="#000" stroke-opacity=".6" stroke-dasharray="9 2">
                <path vector-effect="non-scaling-stroke" d="M346 540V740C350 800 380 835 420 860L780 1100Q830 1125 838 1070M346 540Q350 510 385 517L408 520M346 804L45 1010M346 804L680 1030M346 720L440 655"/>
                <path vector-effect="non-scaling-stroke" d="M410 620Q412 598 430 600L740 815Q770 835 772 870V1000Q770 1025 750 1020L450 815Q410 790 410 750zM422 635Q424 610 442 614L735 817Q760 835 762 870V990Q760 1010 745 1008L460 808Q422 785 422 750z"/>
                <path vector-effect="non-scaling-stroke" d="M472 580V760L712 925V862L472 700zM482 570V715Q485 745 510 765L750 930M518 550Q522 525 540 527L790 700Q825 720 825 760V960M518 550V670Q520 700 545 718L800 890M533 660V720M430 600L482 560M455 815L530 762M712 925L825 850M712 862L770 825M750 1020L838 960M472 775L700 930"/>
            </g>
            <!-- Axes passing through the body -->
            <g fill="none" stroke-width="1.300">
                <path vector-effect="non-scaling-stroke" stroke="#14149a" d="M180 1097L358 972"/>
                <path vector-effect="non-scaling-stroke" stroke="#2a2290" d="M832 652L950 567"/>
                <path vector-effect="non-scaling-stroke" stroke="#8d1717" d="M1080 815L1148 862"/>
                <path vector-effect="non-scaling-stroke" stroke="#7d1c1c" d="M680 540L825 645"/>
            </g>
        </g>
    </svg>

    <!-- View cube -->
    <svg class="absolute right-0 top-0 h-[130px] w-[155px]" viewBox="0 18 465 390" aria-label="View cube">
        <defs><linearGradient id="vc" x2="0" y2="1"><stop stop-color="#f7f7f7"/><stop offset="1" stop-color="#dcdcdc"/></linearGradient><filter id="vs" x="-40%" y="-40%" width="180%" height="180%"><feGaussianBlur stdDeviation="9"/></filter></defs>
        <path fill="#999" filter="url(#vs)" d="M195 260l92 88 92-88-92-50z"/>
        <path stroke="#5aff5a" stroke-width="6" d="M288 80v22"/><path stroke="#5a5af5" stroke-width="6" d="M176 275l20-12"/><path stroke="#ff8a8a" stroke-width="6" d="M378 262l22 13"/>
        <g stroke="#777" stroke-width="2.500" stroke-dasharray="5 1"><path fill="#f3f3f3" d="M182 149l105-49 104 49-105 58z"/><path fill="url(#vc)" d="M182 149l104 58v123l-93-66z"/><path fill="url(#vc)" d="M391 149l-105 58v123l95-68z"/></g>
        <g font-family="Liberation Sans, sans-serif" text-anchor="middle">
            <g font-size="22" fill="#8c8f93" font-weight="bold"><text transform="translate(236 249) skewY(31)">FRONT</text><text transform="translate(339 247) skewY(-31)">RIGHT</text><text font-weight="normal" transform="translate(285 156) rotate(27) skewX(-25)">TOP</text></g>
            <g font-size="36" stroke-width="1"><text x="287" y="73" fill="#6bff6b" stroke="#6bff6b">Y</text><text x="157" y="298" fill="#7a7af8" stroke="#7a7af8">Z</text><text x="415" y="298" fill="#ff8a8a" stroke="#ff8a8a">X</text></g>
        </g>
    </svg>

    <!-- Browser tree -->
    <aside class="absolute left-1 top-[5px] w-[374px]">
        <div class="flex h-[31px] items-center border border-b-2 border-[#c9c9c9] bg-[#f1f1f1] pl-1.5 pr-3 text-[#555]">
            <button aria-label="Collapse"><svg class="h-2 w-3" viewBox="0 0 12 8"><path fill="#333" d="M6 0v8L0 4zM12 0v8L6 4z"/></svg></button>
            <span class="ml-3">BROWSER</span>
            <button aria-label="Hide" class="ml-auto"><svg class="size-3" viewBox="0 0 12 12"><circle cx="6" cy="6" r="6" fill="#333"/><path stroke="#fff" stroke-width="2" d="M3 6h6"/></svg></button>
        </div>
        <ul class="mt-[7px] flex flex-col gap-1.5">
            <li class="flex h-6 items-center">
                <svg class="ml-[22px] mr-[14px] size-[9px]" viewBox="0 0 10 10"><path fill="#666" stroke="#000" stroke-width="1.500" d="M9 1v8H1z"/></svg>
                <div class="flex h-6 items-center bg-[#f1f1f1] pl-1 pr-2">
                    <button aria-label="Toggle visibility"><svg class="h-3 w-5"><use href="#i-eye"/></svg></button>
                    <button class="ml-[7px] flex h-5 items-center bg-[#969696] text-[13px] font-bold text-white"><span class="flex h-5 w-[31px] items-center justify-center border-r border-[#b5b5b5]"><svg class="size-4" viewBox="0 0 16 16"><path fill="#dfe5ee" stroke="#555" d="M1 4l3-3h11v11l-3 3H1z"/><path fill="#aab3c2" d="M12 4l3-3v11l-3 3z"/></svg></span><span class="pl-3 pr-2.5">Toy Car 4 v1</span></button>
                    <input type="radio" checked aria-label="Activate Toy Car 4 v1" class="ml-[5px] size-[17px] appearance-none rounded-full border border-[#777] bg-[radial-gradient(circle,#333_3px,#dfe3ea_4px)]">
                </div>
            </li>
            <li class="flex h-6 items-center">
                <svg class="ml-[45px] mr-3.5 h-3 w-[9px]" viewBox="0 0 9 12"><path fill="#fff" stroke="#333" d="M1 1l7 5-7 5z"/></svg>
                <div class="flex h-6 items-center bg-[#f1f1f1] pl-[3px] pr-3"><svg class="size-4 text-[#808080]"><use href="#i-gear"/></svg><button class="ml-[17px]">Document Settings</button></div>
            </li>
            <li class="flex h-6 items-center">
                <svg class="ml-[45px] mr-3.5 h-3 w-[9px]" viewBox="0 0 9 12"><path fill="#fff" stroke="#333" d="M1 1l7 5-7 5z"/></svg>
                <div class="flex h-6 items-center bg-[#f1f1f1] pl-[3px] pr-2.5"><svg class="h-[17px] w-[21px]"><use href="#i-folder"/></svg><button class="ml-[17px]">Named Views</button></div>
            </li>
            <li class="flex h-6 items-center">
                <svg class="ml-[45px] mr-3.5 h-3 w-[9px]" viewBox="0 0 9 12"><path fill="#fff" stroke="#333" d="M1 1l7 5-7 5z"/></svg>
                <div class="flex h-6 items-center bg-[#f1f1f1] pl-[3px] pr-2.5"><svg class="h-[17px] w-[21px]"><use href="#i-folder"/></svg><button class="ml-[17px]">Selection Sets</button></div>
            </li>
            <li class="flex h-6 items-center">
                <svg class="ml-[45px] mr-3.5 h-3 w-[9px]" viewBox="0 0 9 12"><path fill="#fff" stroke="#333" d="M1 1l7 5-7 5z"/></svg>
                <div class="flex h-6 items-center bg-[#f1f1f1] pl-[3px] pr-3.5"><button aria-label="Toggle visibility"><svg class="h-3.5 w-5"><use href="#i-eye-off"/></svg></button><svg class="ml-[11px] h-[17px] w-[21px]"><use href="#i-folder"/></svg><button class="ml-[17px]">Origin</button></div>
            </li>
            <li class="flex h-6 items-center">
                <svg class="ml-[45px] mr-3.5 h-3 w-[9px]" viewBox="0 0 9 12"><path fill="#fff" stroke="#333" d="M1 1l7 5-7 5z"/></svg>
                <div class="flex h-6 items-center bg-[#f1f1f1] pl-[3px] pr-3.5"><button aria-label="Toggle visibility"><svg class="h-3 w-5"><use href="#i-eye"/></svg></button><svg class="ml-[11px] h-[17px] w-[21px]"><use href="#i-folder"/></svg><button class="ml-[17px]">Bodies</button></div>
            </li>
            <li class="flex h-6 items-center">
                <svg class="ml-[45px] mr-3.5 h-3 w-[9px]" viewBox="0 0 9 12"><path fill="#fff" stroke="#333" d="M1 1l7 5-7 5z"/></svg>
                <div class="flex h-6 items-center bg-[#f1f1f1] pl-[3px] pr-3.5"><button aria-label="Toggle visibility"><svg class="h-3 w-5"><use href="#i-eye"/></svg></button><svg class="ml-[11px] h-[17px] w-[21px]"><use href="#i-folder"/></svg><button class="ml-[17px]">Sketches</button></div>
            </li>
        </ul>
    </aside>

    <div class="absolute bottom-1.5 left-1 flex h-[31px] w-[374px] items-center border-x border-b-2 border-[#c9c9c9] bg-[#f1f1f1] pl-[30px] pr-3 text-[#555]">
        COMMENTS
        <button aria-label="Show comments" class="ml-auto"><svg class="size-3" viewBox="0 0 12 12"><circle cx="6" cy="6" r="6" fill="#333"/><path stroke="#fff" stroke-width="1.800" d="M3 6h6M6 3v6"/></svg></button>
    </div>

    <!-- Navigation bar -->
    <div class="absolute bottom-2 left-1/2 flex h-[30px] w-[296px] -translate-x-[146px] items-center bg-[#f1f1f1] pl-[3px]" role="toolbar" aria-label="Navigation">
        <button aria-label="Orbit" class="flex items-center gap-2"><svg class="size-5" viewBox="0 0 20 20"><g fill="none" stroke="#555" stroke-width="1.300"><ellipse cx="10" cy="10" rx="4" ry="9"/><path d="M5 6c-7 2-5 8 4 8M14 6c6 2 6 7 0 8"/></g><path stroke="#1c86e3" stroke-width="1.500" d="M10 7v6M7 10h6"/><path fill="#333" d="M12 3l4 1-3 3z"/></svg><svg class="h-[5px] w-1.5"><use href="#i-down"/></svg></button>
        <button aria-label="Look At" class="ml-2"><svg class="h-5 w-[19px]" viewBox="0 0 19 20"><path fill="#666" d="M2 5l5-3v2l6-4v2l3 1-2 2H5v1H2z"/><path fill="#e2e2e2" stroke="#555" d="M1 7h17v12H1z"/><path fill="#8b98a8" stroke="#333" d="M4 10h11v6H4z"/></svg></button>
        <button aria-label="Pan" class="ml-3"><svg class="size-5" viewBox="0 0 20 20"><path fill="#fff" stroke="#444" stroke-width="1.200" d="M6 19c-1-4-4-5-5-8 1-2 3 0 4 1L4 4c0-2 2-2 2 0l1 4V2c0-2 2-2 2 0v6l1-7c0-1 2-1 2 0v7l2-5c1-2 2-1 2 0l-1 7 2-3c1-1 2 0 2 1-2 4-3 7-4 11z"/></svg></button>
        <button aria-label="Zoom" class="ml-3"><svg class="size-[21px]" viewBox="0 0 21 21"><path stroke="#333" stroke-width="3.500" d="M13 13l6 7"/><circle cx="8" cy="8" r="7" fill="#e3efee" stroke="#777"/><path stroke="#333" d="M15 4h5M17.500 1v5M15 8h5"/></svg></button>
        <button aria-label="Fit" class="ml-[11px] flex items-center gap-1.5"><svg class="size-[21px]" viewBox="0 0 21 21"><path fill="none" stroke="#999" stroke-dasharray="3 2" d="M1 1h18v19H1z"/><path stroke="#333" stroke-width="3.500" d="M13 13l6 7"/><circle cx="8" cy="8" r="6.500" fill="#e3efee" stroke="#777"/></svg><svg class="h-[5px] w-1.5"><use href="#i-down"/></svg></button>
        <button aria-label="Display Settings" class="ml-2 flex items-center gap-1"><svg class="h-5 w-[19px]" viewBox="0 0 19 20"><path fill="#ddd" stroke="#666" d="M1 1h17v14H1z"/><path fill="#8fb0dc" stroke="#4b6d9e" d="M3 3h13v10H3z"/><path fill="#999" stroke="#555" d="M7 15h5v2h3v2H4v-2h3z"/></svg><svg class="h-[5px] w-1.5"><use href="#i-down"/></svg></button>
        <button aria-label="Grid and Snaps" class="ml-[9px] flex items-center gap-1"><svg class="h-5 w-[19px]" viewBox="0 0 19 20"><path fill="#e6e6e6" stroke="#444" d="M.500.500h18v19H.500z"/><path stroke="#666" stroke-width=".8" d="M4 0v20M7 0v20M10 0v20M13 0v20M16 0v20M0 4h19M0 7h19M0 10h19M0 13h19M0 16h19"/></svg><svg class="h-[5px] w-1.5"><use href="#i-down"/></svg></button>
        <button aria-label="Viewports" class="ml-[9px] flex items-center gap-1"><svg class="h-5 w-[19px]" viewBox="0 0 19 20"><path fill="#8fb0dc" stroke="#3f5f92" stroke-width="1.500" d="M1 1h17v17H1zM9.500 1v17M1 9.500h17"/></svg><svg class="h-[5px] w-1.5"><use href="#i-down"/></svg></button>
    </div>

    <button aria-label="Assistant" class="absolute bottom-[9px] right-[11px] size-[21px] rounded-full rounded-br-none bg-black"><svg class="size-[21px]" viewBox="0 0 21 21"><path stroke="#fff" stroke-width="1.300" d="M4 13l7-6M8 14l8-7M12 14l3-3M15 7v6"/></svg></button>
</main>

<!-- Timeline -->
<footer class="relative flex h-[61px] shrink-0 items-start border-t border-[#cfcfcf]">
    <div class="absolute left-[248px] top-0 h-2 w-[221px] rounded-b-md bg-[#c9c9c9]"></div>
    <div class="flex w-[170px] shrink-0 items-center gap-[13px] pl-[11px] pt-[25px]">
        <button aria-label="Go to start"><svg class="h-[18px] w-[18px]" viewBox="0 0 18 18"><path fill="#555" d="M1 1h3v16H1zM16 1v16L5 9z"/></svg></button>
        <button aria-label="Step back"><svg class="h-[18px] w-[18px]" viewBox="0 0 18 18"><path fill="#555" d="M13 1v16L1 9zM15 6h2v6h-2z"/></svg></button>
        <button aria-label="Play"><svg class="h-[22px] w-[18px]" viewBox="0 0 18 22"><path fill="#555" d="M3 0l14 11L3 22z"/></svg></button>
        <button aria-label="Step forward"><svg class="h-[18px] w-[18px]" viewBox="0 0 18 18"><path fill="#555" d="M5 1v16l12-8zM1 6h2v6H1z"/></svg></button>
        <button aria-label="Go to end"><svg class="h-[18px] w-[18px]" viewBox="0 0 18 18"><path fill="#555" d="M14 1h3v16h-3zM2 1v16l11-8z"/></svg></button>
    </div>
    <div class="relative flex shrink-0 pl-[7px] pr-3.5 pt-[15px]">
        <div id="timeline" class="flex"></div>
        <div class="absolute inset-x-0 top-[51px] flex gap-[3px]"><i class="h-0.5 w-[5px] bg-[#c9c9c9]"></i><i class="h-0.5 w-[5px] bg-[#c9c9c9]"></i><i class="h-0.5 flex-1 bg-[#c9c9c9]"></i><i class="h-0.5 w-[5px] bg-[#c9c9c9]"></i><i class="h-0.5 w-[5px] bg-[#c9c9c9]"></i></div>
        <svg class="absolute left-[599px] top-3 h-[41px] w-[15px]" viewBox="0 0 15 41"><path fill="#666" d="M0 0h15v6l-6 5v30H6V11L0 6z"/></svg>
    </div>
    <button aria-label="Timeline settings" class="ml-auto mr-[13px] mt-[25px]"><svg class="size-5 text-[#707070]"><use href="#i-gear"/></svg></button>
</footer>

<script>
    // Isometric ground grid, one major cell is (dx, dy) on screen
    const ox = 929.6, oy = 594.8, dx = 118.6, dy = 68.47;
    const uMin = -31, uMax = 30, vMin = -30, vMax = 29; // in minor cells

    function point(u, v) {
        return (ox + (u + v) / 5 * dx).toFixed(1) + ' ' + (oy + (v - u) / 5 * dy).toFixed(1);
    }

    let minor = '', major = '';
    for (let u = uMin; u <= uMax; u++) {
        const line = `M${point(u, vMin)}L${point(u, vMax)}`;
        if (u % 5 === 0) major += line; else minor += line;
    }
    for (let v = vMin; v <= vMax; v++) {
        const line = `M${point(uMin, v)}L${point(uMax, v)}`;
        if (v % 5 === 0) major += line; else minor += line;
    }
    document.getElementById('grid').innerHTML = `
        <path stroke="#ededed" stroke-width="1.200" d="${minor}"/>
        <path stroke="#d0d0d0" stroke-width="1.300" d="${major}"/>
        <path stroke="#808080" stroke-width="1.500" d="M${point(uMin, vMin)}L${point(uMax, vMin)}L${point(uMax, vMax)}L${point(uMin, vMax)}Z"/>
        <path stroke="#ff9a9a" stroke-width="1.400" d="M${point(0, vMin)}L${point(0, vMax)}"/>
        <path stroke="#9a9aff" stroke-width="1.400" d="M${point(uMin, 0)}L${point(uMax, 0)}"/>`;

    // Timeline features in order
    const icons = {
        s: ['Sketch', 't-sketch'], e: ['Extrude', 'i-extrude'], h: ['Shell', 'i-shell'], f: ['Fillet', 'i-fillet'],
        p: ['Plane', 'i-offset'], r: ['Revolve', 'i-revolve'], c: ['Circular Pattern', 'i-circ'], t: ['Thread', 'i-thread'], m: ['Mirror', 'i-mirror']
    };
    const features = 'seeesesssee' + 'shssesese' + 'fseffsefhpsepsrsr' + 'secssrpsrssstsepmps';
    const highlighted = [6, 7, 39];
    const marker = 20;

    document.getElementById('timeline').innerHTML = [...features].map((key, i) => {
        const [name, icon] = icons[key];
        const bg = highlighted.includes(i) ? 'bg-[#e6e81e]' : '';
        const fade = i >= marker && key !== 'c' ? 'opacity-25' : '';
        return `<div class="flex w-[30px] flex-col items-center">
            <button aria-label="${name}" class="flex h-[30px] w-[29px] items-center justify-center rounded-xs ${bg}"><svg class="size-5 ${fade}"><use href="#${icon}"/></svg></button>
            <i class="h-1.5 w-[3px] bg-[#c9c9c9]"></i>
        </div>`;
    }).join('');
</script>

</body>
</html>
